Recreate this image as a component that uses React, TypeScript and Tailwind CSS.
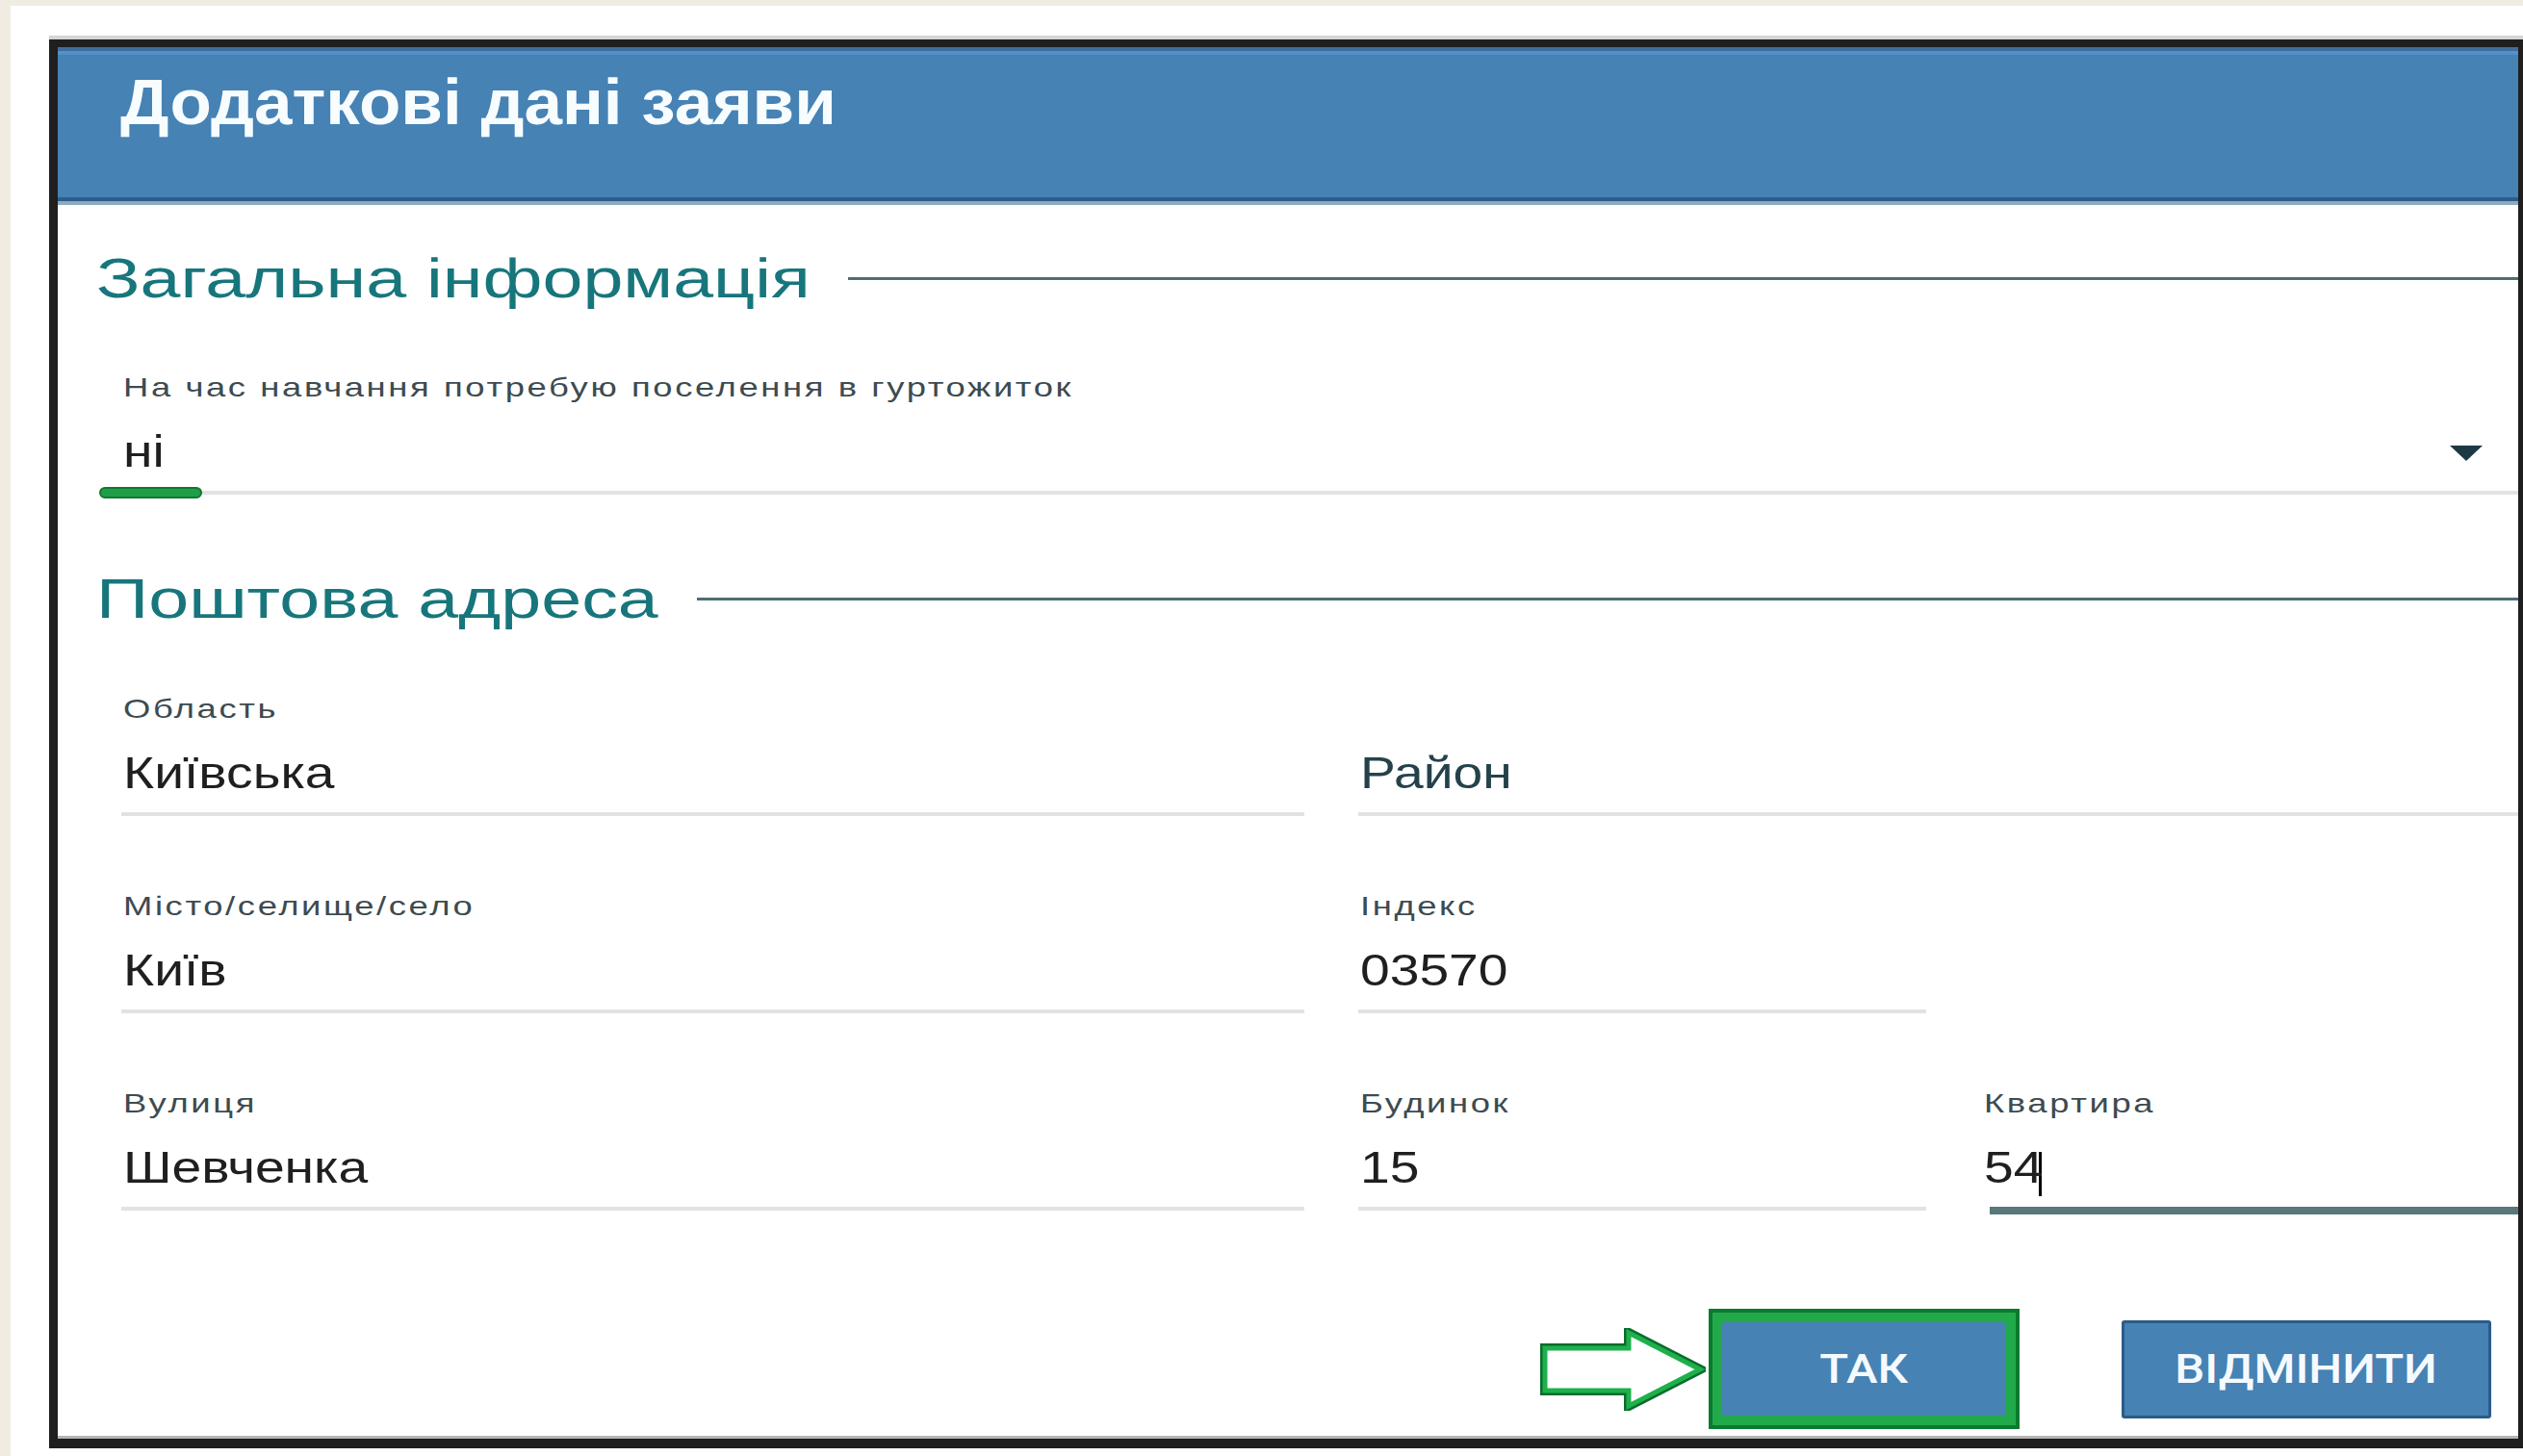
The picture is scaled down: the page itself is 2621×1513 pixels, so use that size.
import React from "react";

// the form text is set a little wide, so labels and values get a horizontal stretch
const LABEL =
    "w-fit origin-left scale-x-[1.3] whitespace-nowrap text-[28px] leading-[28px] tracking-[2px] text-[#3d4b50]";
const VALUE = "w-fit origin-left scale-x-[1.2] whitespace-nowrap text-[46px] leading-[46px]";

type FieldProps = {
    label?: string;
    value?: string;
    placeholder?: string;
    focused?: boolean;
    className?: string;
};

// Material-style text field: floating label, value, underline
const Field = ({label, value, placeholder, focused, className = ""}: FieldProps) => {
    return (
        <div className={`flex flex-col ${className}`}>
            <div className="h-[28px] pl-[2px]">
                {label && <div className={LABEL}>{label}</div>}
            </div>
            <div className="mt-[29px] flex h-[46px] items-center pl-[2px]">
                {value ? (
                    <span className={`${VALUE} text-[#1f1f1f]`}>{value}</span>
                ) : (
                    <span className={`${VALUE} text-[#25424b]`}>{placeholder}</span>
                )}
                {focused && <span className="ml-[6px] mt-[14px] inline-block h-[46px] w-[3px] bg-black"/>}
            </div>
            {focused ? (
                <div className="mt-[18px] mb-[-4px] ml-[8px] h-[8px] bg-[#5a777c]"/>
            ) : (
                <div className="mt-[18px] h-[4px] bg-[#e2e2e2]"/>
            )}
        </div>
    );
};

const SectionTitle = ({children, className}: { children: React.ReactNode; className: string }) => {
    return (
        <div className="flex items-center">
            <div className={`shrink-0 ${className}`}>
                <h2 className="w-fit origin-left scale-x-[1.3] whitespace-nowrap text-[58px] font-normal leading-[58px] text-[#17767c]">
                    {children}
                </h2>
            </div>
            <div className="h-[3px] flex-1 bg-[#4e6e72]"/>
        </div>
    );
};

const GreenArrow = () => (
    <svg width="172" height="86" viewBox="0 0 172 86" className="shrink-0">
        <path d="M5 21 H92 V5 L166 43 L92 81 V65 H5 Z" fill="#ffffff" stroke="#0c6c2c" strokeWidth="10"/>
        <path d="M5 21 H92 V5 L166 43 L92 81 V65 H5 Z" fill="#ffffff" stroke="#1db14b" strokeWidth="5"/>
    </svg>
);

const App = () => {
    return (
        <div className="min-h-screen overflow-hidden bg-[#f0ece1] pl-[11px] pt-[6px] font-['Liberation_Sans',Arial,sans-serif]">
            <div className="min-h-[1507px] bg-white pb-[8px] pl-[40px] pt-[35px]">
                <div
                    className="border-b-[10px] border-l-[9px] border-r-[5px] border-t-[8px] border-[#1f1f1f] shadow-[0_-4px_0_#d5d5d5]">
                    {/* dialog header */}
                    <header
                        className="h-[160px] border-b-4 border-t-4 border-b-[#2e5d8c] border-t-[#3f6e99] bg-[#4682b4] pl-[65px] pt-[19px] shadow-[inset_0_4px_0_#5191c7]">
                        <h1 className="w-fit origin-left scale-x-[1.06] whitespace-nowrap text-[67px] font-bold leading-[67px] text-[#f7fcff]">
                            Додаткові дані заяви
                        </h1>
                    </header>
                    <div className="h-[4px] bg-[#8eaabd]"/>

                    {/* dialog body */}
                    <div className="border-b-[3px] border-[#b5b5b5] pb-[7px] pl-[40px] pt-[47px]">
                        <SectionTitle className="w-[781px]">Загальна інформація</SectionTitle>

                        <div className="mt-[71px] flex flex-col pl-[26px]">
                            <div className="h-[28px] pl-[2px]">
                                <div className={LABEL}>На час навчання потребую поселення в гуртожиток</div>
                            </div>
                            <div className="mt-[29px] flex h-[46px] items-center justify-between pl-[2px]">
                                <span className={`${VALUE} text-[#1f1f1f]`}>ні</span>
                                <svg width="34" height="16" viewBox="0 0 34 16" className="mr-[37px] mt-[4px]">
                                    <path d="M0 0 H34 L17 16 Z" fill="#1c3945"/>
                                </svg>
                            </div>
                            <div className="relative mt-[18px] h-[4px] bg-[#e2e2e2]">
                                <div
                                    className="absolute -left-[23px] -top-[4px] h-[12px] w-[107px] rounded-full border-2 border-[#11782f] bg-[#1f9e47]"/>
                            </div>
                        </div>

                        <div className="mt-[79px]">
                            <SectionTitle className="w-[624px]">Поштова адреса</SectionTitle>
                        </div>

                        <div className="pl-[26px]">
                            <div className="mt-[72px] flex gap-[56px]">
                                <Field className="w-[1229px]" label="Область" value="Київська"/>
                                <Field className="flex-1" placeholder="Район"/>
                            </div>
                            <div className="mt-[80px] flex gap-[56px]">
                                <Field className="w-[1229px]" label="Місто/селище/село" value="Київ"/>
                                <Field className="w-[590px]" label="Індекс" value="03570"/>
                            </div>
                            <div className="mt-[80px] flex gap-[56px]">
                                <Field className="w-[1229px]" label="Вулиця" value="Шевченка"/>
                                <Field className="w-[590px]" label="Будинок" value="15"/>
                                <Field className="ml-[2px] flex-1" label="Квартира" value="54" focused/>
                            </div>
                        </div>

                        {/* actions */}
                        <div className="mt-[102px] flex items-center justify-end pr-[28px]">
                            <GreenArrow/>
                            <div className="ml-[3px] border-4 border-[#0a7a2e] bg-[#22aa4a] p-[10px]">
                                <button
                                    className="flex h-[97px] w-[295px] items-center justify-center bg-[#4682b4] font-['Roboto','Liberation_Sans',sans-serif] text-[42px] font-medium text-[#f4faff]">
                                    <span className="scale-x-[1.17]">ТАК</span>
                                </button>
                            </div>
                            <button
                                className="ml-[106px] flex h-[102px] w-[384px] items-center justify-center rounded-[3px] border-[3px] border-[#2c5b88] bg-[#4682b4] font-['Roboto','Liberation_Sans',sans-serif] text-[42px] font-medium text-[#f4faff]">
                                <span className="scale-x-[1.17]">ВІДМІНИТИ</span>
                            </button>
                        </div>
                    </div>
                </div>
            </div>
        </div>
    );
};

export default App;
